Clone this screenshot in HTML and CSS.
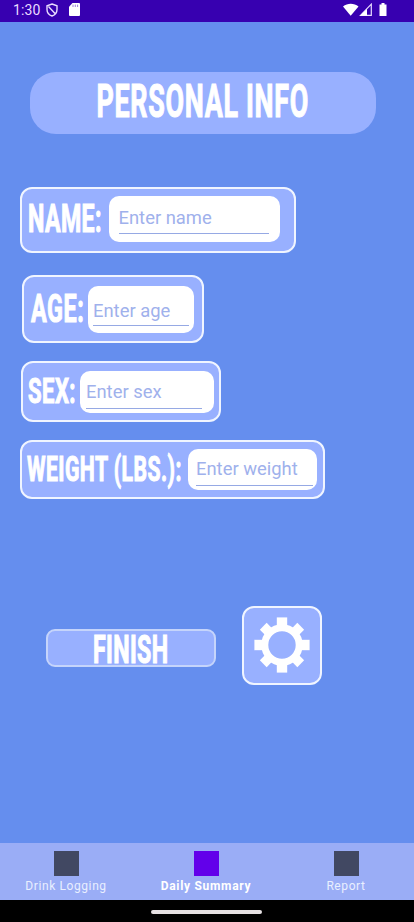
FILE: index.html
```html
<!DOCTYPE html>
<html lang="en">
<head>
<meta charset="utf-8">
<title>Personal Info</title>
<link rel="stylesheet" href="styles.css">
</head>
<body>
<header class="status">
  <span class="clock">1:30</span>
  <svg class="shield" width="12" height="14" viewBox="0 0 12 14"><path d="M6 1 11 2.800V6.500C11 9.800 9 12 6 13 3 12 1 9.800 1 6.500V2.800ZM2.500 3.500 9 10.500" fill="none" stroke="#e9dcff" stroke-width="1.400"/></svg>
  <svg class="sd" width="11" height="13" viewBox="0 0 11 13"><path d="M3.500 0H10a1 1 0 0 1 1 1V12a1 1 0 0 1-1 1H1a1 1 0 0 1-1-1V3.800Z" fill="#fff"/><path d="M4 1.600V4M6.300 1.600V4M8.600 1.600V4" stroke="#9c80da" stroke-width="1"/></svg>
  <svg class="signals" width="46" height="14" viewBox="0 0 46 14"><path d="M0 3.400C4.500-.2 11-.2 15.500 3.400L7.700 12.700Z" fill="#fff"/><path d="M17.500 12.300 28.300 1.200V12.300Z" fill="none" stroke="#e9dcff" stroke-width="1.200"/><path d="M17 12.800 24 5.800V12.800Z" fill="#fff"/><path d="M38.500 0h3v1.500H43.500V13H36.500V1.500h2Z" fill="#fff"/></svg>
</header>
<main class="screen">
  <h1 class="title"><svg class="display" width="214" height="34"><text transform="translate(.5 33) scale(.585 1)" font-size="46" textLength="362">PERSONAL INFO</text></svg></h1>
  <section class="row name">
    <svg class="display" width="75" height="28"><text transform="translate(0 27.300) scale(.61 1)" font-size="38" textLength="120.500">NAME:</text></svg>
    <div class="field"><span>Enter name</span></div>
  </section>
  <section class="row age">
    <svg class="display" width="54" height="29"><text transform="translate(0 28) scale(.6 1)" font-size="39" textLength="88">AGE:</text></svg>
    <div class="field"><span>Enter age</span></div>
  </section>
  <section class="row sex">
    <svg class="display" width="49" height="26"><text transform="translate(0 25) scale(.63 1)" font-size="35" textLength="75.500">SEX:</text></svg>
    <div class="field"><span>Enter sex</span></div>
  </section>
  <section class="row weight">
    <svg class="display" width="156" height="32"><text transform="translate(0 25) scale(.615 1)" font-size="34.500" textLength="251">WEIGHT (LBS.):</text></svg>
    <div class="field"><span>Enter weight</span></div>
  </section>
  <div class="actions">
    <div class="finish"><svg class="display" width="77" height="28"><text transform="translate(0 27.500) scale(.61 1)" font-size="38" textLength="123">FINISH</text></svg></div>
    <div class="settings">
      <svg width="56" height="56" viewBox="-28 -28 56 56">
        <circle r="17.200" fill="none" stroke="#fff" stroke-width="7"/>
        <g fill="#fff"><path id="tooth" d="M-5.200-27.600H5.200V-18H-5.200Z"/><use href="#tooth" transform="rotate(90)"/><use href="#tooth" transform="rotate(180)"/><use href="#tooth" transform="rotate(270)"/>
        <path id="corner" d="M-4.800-26.500H4.800V-18H-4.800Z" transform="rotate(45)"/><use href="#corner" transform="rotate(90)"/><use href="#corner" transform="rotate(180)"/><use href="#corner" transform="rotate(270)"/></g>
      </svg>
    </div>
  </div>
</main>
<nav class="tabs">
  <div class="tab"><i></i><span>Drink Logging</span></div>
  <div class="tab active"><i></i><span>Daily Summary</span></div>
  <div class="tab"><i></i><span>Report</span></div>
</nav>
<footer class="system"><div class="handle"></div></footer>
</body>
</html>
```
FILE: styles.css
```css
* { box-sizing: border-box; }
body { margin: 0; width: 414px; height: 922px; display: flex; flex-direction: column; background: #658eee; font-family: Roboto, "Liberation Sans", sans-serif; overflow: hidden; }
svg { display: block; flex: none; }
.status { height: 22px; flex: none; background: #3700b0; display: flex; align-items: flex-start; padding: 3px 25px 0 13px; }
.clock { color: #e9dcff; font-size: 14px; line-height: 14px; letter-spacing: .1px; width: 33px; }
.sd { margin-left: 11px; }
.signals { margin-left: auto; }
.screen { flex: 1; display: flex; flex-direction: column; align-items: flex-start; }
.display { overflow: visible; }
.display text { font-family: Roboto, sans-serif; font-weight: 700; fill: #fff; stroke: #fff; stroke-width: 1.1px; }
.title { margin: 50px 0 0 30px; width: 346px; height: 62px; border-radius: 26px; background: #98b0ff; padding: 11.500px 0 0 66px; }
.row, .finish, .settings { background: #98b0ff; border: 2px solid #f0f5ff; border-radius: 12px; }
.row { display: flex; align-items: flex-start; }
.field { background: #fff; border-radius: 10px; color: #9fb1ec; font-size: 18.400px; line-height: 22px; white-space: nowrap; }
.field span { display: block; border-bottom: 1px solid #96a9e4; }
.name { width: 276px; height: 66px; margin: 53px 0 0 19.500px; padding: 7px 0 0 6.500px; }
.name svg { margin-top: 9px; }
.name .field { margin-left: 5.500px; width: 171px; height: 46px; padding: 11px 11px 0 10px; }
.name span { height: 27px; }
.age { width: 182px; height: 68px; margin: 22px 0 0 22px; padding: 9px 0 0 7px; }
.age svg { margin-top: 8px; }
.age .field { margin-left: 3px; width: 106px; height: 47px; padding: 14px 5px 0 5px; }
.age span { height: 26px; }
.sex { width: 200px; height: 61px; margin: 18px 0 0 20.500px; padding: 8px 0 0 5.500px; }
.sex svg { margin-top: 7px; }
.sex .field { margin-left: 3px; width: 134px; height: 42px; padding: 10px 12px 0 6px; }
.sex span { height: 28px; }
.weight { width: 305px; height: 59px; margin: 18px 0 0 20px; padding: 7px 0 0 5px; }
.weight svg { margin-top: 7px; }
.weight .field { margin-left: 5px; width: 129px; height: 41px; padding: 9px 4px 0 8px; }
.weight span { height: 28px; }
.actions { display: flex; align-items: flex-start; margin: 107px 0 0 46px; }
.finish { width: 170px; height: 38px; margin-top: 23px; border-radius: 9px; border-color: #c5d4fb; padding: 4px 0 0 45px; }
.settings { width: 80px; height: 79px; margin-left: 26px; padding: 8.500px 0 0 9.500px; }
.tabs { height: 57px; flex: none; background: #9aadf6; display: grid; grid-template-columns: 132px 148px 132px; }
.tab { display: flex; flex-direction: column; align-items: center; padding-top: 8px; color: #e9efff; font-size: 12px; line-height: 14px; letter-spacing: .6px; white-space: nowrap; }
.tab i { width: 25px; height: 25px; background: #414862; margin-bottom: 3px; }
.tab.active { color: #fff; font-weight: 700; letter-spacing: .7px; }
.tab.active i { background: #6200ea; }
.system { height: 22px; flex: none; background: #000; display: flex; justify-content: center; padding: 10px 2px 0 0; }
.handle { width: 111px; height: 4px; border-radius: 2px; background: #e6e1e3; }
```
